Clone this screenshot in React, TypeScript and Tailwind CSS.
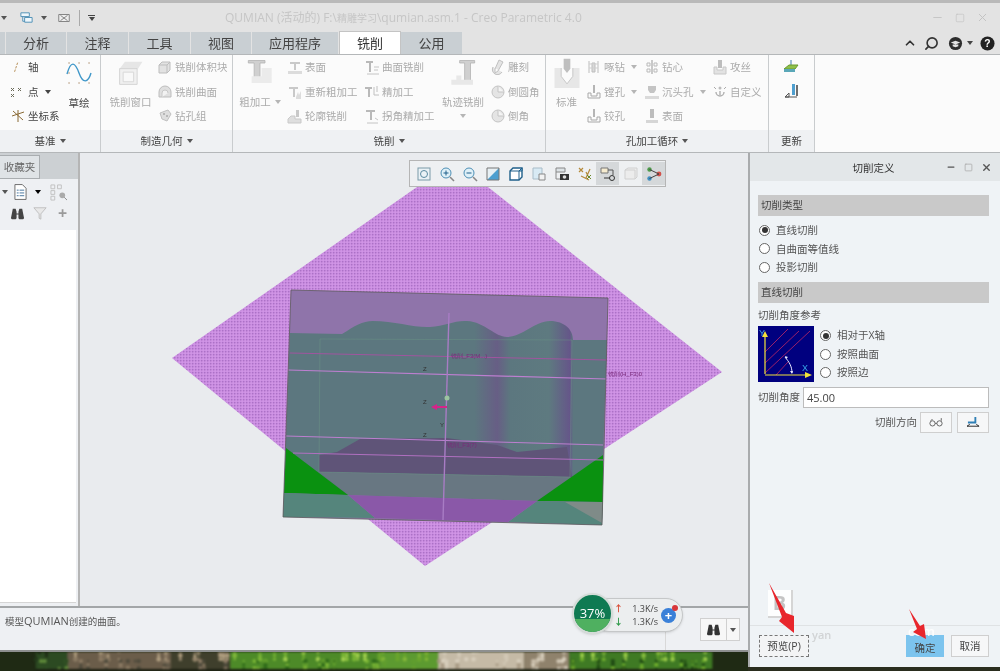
import React from 'react';
import { ChevronUp, Search, Minus, Square, X } from 'lucide-react';

const Caret = ({ className = 'border-t-[#555]' }: { className?: string }) => (
  <span className={`inline-block w-0 h-0 border-x-[3px] border-x-transparent border-t-[4px] ${className}`} />
);

// small greyed ribbon glyphs, all on a 16x16 grid
const glyphs: Record<string, React.ReactNode> = {
  block: <><path d="M2 6l3-3h8v8l-3 3H2z" fill="#e2e2e2" stroke="#bdbdbd" /><path d="M2 6h8v8M10 6l3-3" fill="none" stroke="#bdbdbd" /></>,
  dome: <><path d="M2 13V8a6 6 0 0 1 12 0v5z" fill="#dfdfdf" stroke="#bdbdbd" /><path d="M5 13V9a3 3 0 0 1 6 0" fill="#f2f2f2" stroke="#c8c8c8" /></>,
  drill: <><path d="M3 5l8-3 3 4-4 7-5-2z" fill="#dedede" stroke="#c0c0c0" /><circle cx="7" cy="6" r="1" fill="#aaa" /><circle cx="10" cy="8" r="1" fill="#aaa" /></>,
  face: <><path d="M3 3h10v2H9v6H7V5H3z" fill="#c9c9c9" /><path d="M1 12h14v3H1z" fill="#dcdcdc" /></>,
  rough: <><path d="M2 3h9v2H8v8H6V5H2z" fill="#c9c9c9" /><path d="M9 13l2-5 1 3 2-4v8H9z" fill="#dcdcdc" /></>,
  contour: <><path d="M9 2h3v7H9z" fill="#c9c9c9" /><path d="M1 15v-4l3-3h4v3h6v4z" fill="#dedede" stroke="#c9c9c9" /></>,
  surf: <><path d="M2 2h7v2H7v9H5V4H2z" fill="#b9b9b9" /><path d="M10 8h5M10 11h4M3 15h12" stroke="#c4c4c4" /></>,
  finish: <><path d="M1 3h7v2H6v8H4V5H1z" fill="#b9b9b9" /><path d="M10 3v8h5M13 2v6" stroke="#c0c0c0" fill="none" /></>,
  corner: <><path d="M2 2h9v2H8v8H6V4H2z" fill="#b9b9b9" /><path d="M3 15h11M11 10l3 2" stroke="#c4c4c4" /></>,
  carve: <path d="M9 1l4 2-5 9-3 2 0-4zM3 8a5 5 0 0 0 9 5" fill="#e4e4e4" stroke="#c0c0c0" />,
  round: <><circle cx="8" cy="8" r="6" fill="#e4e4e4" stroke="#c4c4c4" /><path d="M8 2v6h6" fill="#f4f4f4" stroke="#c4c4c4" /></>,
  peck: <><path d="M3 2v12M12 2v12M6 4h3v9H6z" fill="#dadada" stroke="#bdbdbd" /><path d="M3 5h9M3 9h9" stroke="#cfcfcf" /></>,
  core: <><path d="M3 4h3v3H3zM10 4h3v3h-3zM3 10h3v3H3zM10 10h3v3h-3z" fill="none" stroke="#b9b9b9" /><path d="M7 1h2v14H7z" fill="#c9c9c9" /></>,
  tap: <><path d="M6 1h4v8H6z" fill="#bdbdbd" /><path d="M2 8h3v3h6V8h3v7H2z" fill="#e2e2e2" stroke="#c8c8c8" /></>,
  bore: <><path d="M7 1h2v8H7z" fill="#b5b5b5" /><path d="M2 9h3v3h6V9h3v5H2z" fill="#fafafa" stroke="#a8a8a8" /></>,
  sink: <><path d="M4 2h8v4l-2 3H6L4 6z" fill="#c4c4c4" /><path d="M1 12h14v3H1z" fill="#dadada" /></>,
  custom: <><path d="M2 3l2 2M14 3l-2 2" stroke="#aaa" /><circle cx="8" cy="4" r="1.5" fill="#bbb" /><path d="M4 8a4 4 0 1 0 8 0M8 7v4" fill="none" stroke="#b0b0b0" strokeWidth="1.4" /></>,
  base: <><path d="M6 1h4v9H6z" fill="#bdbdbd" /><path d="M2 12h12v3H2z" fill="#d6d6d6" /></>,
};

const Tool = ({ glyph, label, caret }: { glyph: string; label: string; caret?: boolean }) => (
  <div className="h-[24.5px] flex items-center gap-[2px] text-[#ababab] whitespace-nowrap">
    <svg viewBox="0 0 16 16" className="w-4 h-4 shrink-0">{glyphs[glyph]}</svg>
    <span>{label}</span>
    {caret && <Caret className="ml-1 border-t-[#b5b5b5]" />}
  </div>
);

const BigLabel = ({ children, caret }: { children: React.ReactNode; caret?: boolean }) => (
  <div className="text-[#ababab] mt-[9px] flex items-center gap-1 whitespace-nowrap">{children}{caret && <Caret className="border-t-[#b5b5b5]" />}</div>
);

const Group = ({ width, title, caret = true, children }: { width: string; title: string; caret?: boolean; children: React.ReactNode }) => (
  <div className={`${width} shrink-0 flex flex-col border-r border-[#c9ccce]`}>
    <div className="h-[75px] flex overflow-hidden">{children}</div>
    <div className="flex-1 bg-[#eff1f3] flex items-center justify-center gap-1 text-[#444]">
      {title}{caret && <Caret />}
    </div>
  </div>
);

const tabs = [
  { name: '分析', w: 'w-[60px]' },
  { name: '注释', w: 'w-[61px]' },
  { name: '工具', w: 'w-[61px]' },
  { name: '视图', w: 'w-[60px]' },
  { name: '应用程序', w: 'w-[86px]' },
];

const Radio = ({ on, label }: { on?: boolean; label: string }) => (
  <div className="h-[18.5px] flex items-center gap-[6px] text-[#555]">
    <span className="w-[11px] h-[11px] rounded-full border border-[#666] bg-white flex items-center justify-center">
      {on && <span className="w-[6px] h-[6px] rounded-full bg-[#333]" />}
    </span>
    <span>{label}</span>
  </div>
);

const SectionHead = ({ children }: { children: React.ReactNode }) => (
  <div className="h-[21px] bg-[#c9c9c9] flex items-center pl-[3px] text-[#444]">{children}</div>
);

const Binoculars = ({ className = 'w-4 h-4', fill = '#333' }: { className?: string; fill?: string }) => (
  <svg viewBox="0 0 16 16" className={className}>
    <path d="M3 3h3l1 3v2h2V6l1-3h3l2 10-1 1H10l-1-1V9H7v4l-1 1H2l-1-1z" fill={fill} />
  </svg>
);

const ToolbarButton = ({ active, children }: { active?: boolean; children: React.ReactNode }) => (
  <div className={`w-[23px] h-[23px] flex items-center justify-center ${active ? 'bg-[#d5d8da]' : ''}`}>
    <svg viewBox="0 0 16 16" className="w-4 h-4">{children}</svg>
  </div>
);

// desktop wallpaper along the bottom of the window: colour zones, then speckle
const zones = [
  { x: 0, w: 35, fill: '#2c4a22' },
  { x: 35, w: 115, fill: '#6b5d4a' },
  { x: 150, w: 65, fill: '#3f3f2c' },
  { x: 215, w: 165, fill: '#4d8a28' },
  { x: 380, w: 65, fill: '#5c9a30' },
  { x: 445, w: 95, fill: '#c5baa6' },
  { x: 540, w: 50, fill: '#8f826c' },
  { x: 590, w: 158, fill: '#3f7a24' },
];

const speckleFill = (x: number, tone: number) => {
  if (x < 35) return ['#2c4a22', '#5f8a3a', '#1d2a16'][tone];
  if (x < 215) return ['#8b7a63', '#4e4a3c', '#b3a182'][tone];
  if (x < 380) return ['#7ab535', '#2f6a1a', '#a4d050'][tone];
  if (x < 445) return ['#6aa52c', '#5c9a30', '#86b83a'][tone];
  if (x < 590) return ['#d8cfbd', '#a89a84', '#c5baa6'][tone];
  return ['#6fae2c', '#1f4a14', '#9ccc4a'][tone];
};

const wallpaper = Array.from({ length: 700 }, (_, i) => {
  const x = (i * 7919 + i * i * 13) % 748;
  const y = (i * i * 31 + i * 17) % 20;
  return { x, y, r: 1 + (i % 3) * 0.7, fill: speckleFill(x, (i * 5 + (i >> 2)) % 3) };
});

export default function App() {
  return (
    <div className="relative w-[1000px] h-[671px] overflow-hidden bg-[#1f2a14] text-[10.5px] leading-none blur-[0.35px] [font-family:'Open_Sans','Noto_Sans_CJK_SC',sans-serif]">
      <div className="h-[3px] bg-[#b9b9b9]" />

      {/* Title bar */}
      <div className="h-[29px] bg-[#e3e3e3] flex items-center relative">
        <div className="flex items-center w-[225px] pl-[1px] gap-[7px]">
          <Caret />
          <svg viewBox="0 0 16 16" className="w-[15px] h-[15px] ml-[5px]"><path d="M2 3h9v4H2zM6 8h8v5H6zM4 7v5h2" fill="#eef6fb" stroke="#4d8fb5" /></svg>
          <Caret />
          <svg viewBox="0 0 16 16" className="w-[14px] h-[14px] ml-[3px]"><path d="M2 4h12v8H2zM4 5l8 6M12 5l-8 6" fill="#eee" stroke="#777" /></svg>
          <span className="w-px h-[16px] bg-[#aaa] ml-[1px]" />
          <span className="flex flex-col items-center gap-[1px] ml-[1px]"><span className="w-[7px] h-px bg-[#444]" /><Caret className="border-t-[#444]" /></span>
        </div>
        <span className="text-[12px] text-[#c6c6c6] whitespace-nowrap">QUMIAN (活动的) F:\<span className="text-[10px]">精雕学习</span>\qumian.asm.1 - Creo Parametric 4.0</span>
        <div className="ml-auto flex items-center gap-[11px] pr-[11px] text-[#c2c2c2]">
          <Minus size={13} strokeWidth={1.6} />
          <Square size={10} strokeWidth={1.6} />
          <X size={13} strokeWidth={1.8} />
        </div>
      </div>

      {/* Tabs */}
      <div className="h-[22px] bg-[#e3e3e3] flex items-stretch text-[13px] text-[#444] relative">
        <div className="w-[5px] bg-[#c9cfd3] mr-px" />
        {tabs.map((t) => (
          <div key={t.name} className={`${t.w} bg-[#c9cfd3] mr-px flex items-center justify-center`}>{t.name}</div>
        ))}
        <div className="w-[62px] bg-white border-x border-t border-[#c4c4c4] flex items-center justify-center -mt-px text-[#333]">铣削</div>
        <div className="w-[61px] bg-[#c9cfd3] flex items-center justify-center">公用</div>
        <div className="ml-auto flex items-center gap-[7px] pr-[5px] text-[#333]">
          <ChevronUp size={14} strokeWidth={3} />
          <Search size={15} strokeWidth={2.6} className="-scale-x-100" />
          <svg viewBox="0 0 16 16" className="w-[15px] h-[15px] ml-[2px]"><circle cx="8" cy="8" r="7" fill="#2d2d2d" /><path d="M3 7l5-2 5 2-5 2zM5 9v2l3 1 3-1V9" fill="#e3e3e3" /></svg>
          <Caret className="border-t-[#444] -ml-[3px]" />
          <svg viewBox="0 0 16 16" className="w-[15px] h-[15px]"><circle cx="8" cy="8" r="7.5" fill="#222" /><text x="8" y="12" textAnchor="middle" fontSize="11" fontWeight="700" fill="#fff" fontFamily="Liberation Sans, sans-serif">?</text></svg>
        </div>
      </div>

      {/* Ribbon */}
      <div className="h-[99px] bg-[#fbfbfb] flex items-stretch border-y border-[#b4b7b9]">
        <Group width="w-[101px]" title="基准">
          <div className="w-[65px] pl-[12px] text-[#444] shrink-0">
            <div className="h-[24.5px] flex items-center gap-[8px]"><svg viewBox="0 0 10 14" className="w-[8px] h-[13px]"><path d="M7 1L3 13" stroke="#a5742e" strokeDasharray="3 1.5" /></svg><span>轴</span></div>
            <div className="h-[24.5px] flex items-center gap-[4px] -ml-[2px]"><svg viewBox="0 0 14 14" className="w-[14px] h-[14px]"><path d="M1 3l3 3M4 3L1 6M8 3l3 3M11 3L8 6M1 9l3 3M4 9l-3 3" stroke="#6b6b5a" /></svg><span>点</span><Caret className="ml-[2px]" /></div>
            <div className="h-[24.5px] flex items-center gap-[2px] -ml-[2px]"><svg viewBox="0 0 16 16" className="w-[16px] h-[16px]"><path d="M8 2v12M2 8l12-4M3 3l10 9" stroke="#8a6a35" fill="none" /></svg><span className="whitespace-nowrap">坐标系</span></div>
          </div>
          <div className="flex flex-col items-center text-[#444] ml-[1px]">
            <svg viewBox="0 0 26 26" className="w-[26px] h-[26px] mt-[5px]"><path d="M1 14C5 0 9 2 13 13s9 10 12 0" fill="none" stroke="#3f97c9" strokeWidth="1.4" /><path d="M3 3h.1M13 3h.1M23 3h.1M3 13h.1M23 23h.1M3 23h.1M13 23h.1" stroke="#b49a7c" strokeWidth="1.5" strokeLinecap="round" /></svg>
            <span className="mt-[12px]">草绘</span>
          </div>
        </Group>

        <Group width="w-[132px]" title="制造几何">
          <div className="w-[49px] shrink-0 flex flex-col items-center ml-[5px]">
            <svg viewBox="0 0 32 32" className="w-[28px] h-[30px] mt-[3px]"><path d="M3 11l6-8h20l-5 8z" fill="#e6e6e6" /><path d="M3 11h20v18H3z" fill="#f0f0f0" stroke="#d0d0d0" /><path d="M7 15h12v11H7z" fill="#f8f8f8" stroke="#d5d5d5" /></svg>
            <BigLabel>铣削窗口</BigLabel>
          </div>
          <div className="ml-[2px]">
            <Tool glyph="block" label="铣削体积块" />
            <Tool glyph="dome" label="铣削曲面" />
            <Tool glyph="drill" label="钻孔组" />
          </div>
        </Group>

        <Group width="w-[313px]" title="铣削">
          <div className="w-[48px] shrink-0 flex flex-col items-center ml-[3px]">
            <svg viewBox="0 0 32 36" className="w-[28px] h-[30px] mt-[3px]"><path d="M2 3h20v3h-6v23h-7V6H2z" fill="#d0d0d0" stroke="#b5b5b5" /><path d="M6 30h24V12H18v10H6z" fill="#ebebeb" /></svg>
            <BigLabel caret>粗加工</BigLabel>
          </div>
          <div className="w-[77px] shrink-0 ml-[3px]">
            <Tool glyph="face" label="表面" />
            <Tool glyph="rough" label="重新粗加工" />
            <Tool glyph="contour" label="轮廓铣削" />
          </div>
          <div className="w-[76px] shrink-0">
            <Tool glyph="surf" label="曲面铣削" />
            <Tool glyph="finish" label="精加工" />
            <Tool glyph="corner" label="拐角精加工" />
          </div>
          <div className="w-[46px] shrink-0 flex flex-col items-center">
            <svg viewBox="0 0 32 36" className="w-[28px] h-[30px] mt-[3px]"><path d="M12 3h18v3h-5v22h-7V6h-6z" fill="#d0d0d0" stroke="#b5b5b5" /><path d="M2 32v-6h6v-5h6v5h14v6z" fill="#e8e8e8" /></svg>
            <BigLabel>轨迹铣削</BigLabel>
            <Caret className="mt-[6px] border-t-[#b5b5b5]" />
          </div>
          <div className="ml-[4px]">
            <Tool glyph="carve" label="雕刻" />
            <Tool glyph="round" label="倒圆角" />
            <Tool glyph="round" label="倒角" />
          </div>
        </Group>

        <Group width="w-[223px]" title="孔加工循环">
          <div className="w-[31px] shrink-0 flex flex-col items-center ml-[5px]">
            <svg viewBox="0 0 30 36" className="w-[28px] h-[30px] mt-[3px]"><path d="M0 12h30v24H0z" fill="#e7e7e7" /><path d="M8 12v10l7 9 7-9V12" fill="#fbfbfb" stroke="#c0c0c0" /><path d="M11 1h8v12l-4 5-4-5z" fill="#bfbfbf" /></svg>
            <BigLabel>标准</BigLabel>
          </div>
          <div className="w-[58px] shrink-0 ml-[4px]">
            <Tool glyph="peck" label="啄钻" caret />
            <Tool glyph="bore" label="镗孔" caret />
            <Tool glyph="bore" label="铰孔" />
          </div>
          <div className="w-[68px] shrink-0">
            <Tool glyph="core" label="钻心" />
            <Tool glyph="sink" label="沉头孔" caret />
            <Tool glyph="base" label="表面" />
          </div>
          <div>
            <Tool glyph="tap" label="攻丝" />
            <Tool glyph="custom" label="自定义" />
          </div>
        </Group>

        <Group width="w-[46px]" title="更新" caret={false}>
          <div className="w-full flex flex-col items-center gap-[8px] pt-[4px] -ml-[1px]">
            <svg viewBox="0 0 16 16" className="w-[16px] h-[16px]"><path d="M8 1v7" stroke="#3d7db0" /><path d="M1 10l5-4h9l-3 4z" fill="#8fc04a" stroke="#6a9a30" /><path d="M1 10h11v3H1z" fill="#5aa7b8" /></svg>
            <svg viewBox="0 0 16 16" className="w-[16px] h-[16px]"><path d="M9 1h3v11H9z" fill="#4f9fcf" /><path d="M14 2v11" stroke="#333" strokeWidth="1.4" /><path d="M2 14l4-4v4z" fill="none" stroke="#555" /><path d="M2 14h12" stroke="#555" /></svg>
          </div>
        </Group>
        <div className="flex-1" />
      </div>

      {/* Work area */}
      <div className="flex h-[518px]">
        <div className="w-[748px] flex flex-col">
          <div className="h-[453px] flex">
            {/* Model tree panel */}
            <div className="w-[80px] flex flex-col bg-[#eef0f3] border-r-2 border-[#b5b5b5] shrink-0">
              <div className="h-[26px] bg-[#ccd0d3] flex items-end">
                <div className="w-[41px] h-[24px] bg-[#dfe3e6] border border-[#a9adb0] flex items-center justify-center text-[#666] -ml-px">收藏夹</div>
              </div>
              <div className="h-[51px] flex flex-col gap-[2px] pt-[3px] pl-[2px]">
                <div className="flex items-center h-[20px]">
                  <Caret />
                  <svg viewBox="0 0 14 18" className="w-[13px] h-[18px] ml-[6px]"><path d="M1 1h8l4 4v12H1z" fill="#fff" stroke="#666" /><path d="M3 7h2M6 7h5M3 10h2M6 10h5M3 13h2M6 13h5" stroke="#3f6f9a" /></svg>
                  <Caret className="ml-[8px]" />
                  <svg viewBox="0 0 18 18" className="w-[17px] h-[17px] ml-[9px]"><path d="M1 1h4v4H1zM1 7h4v4H1zM1 13h4v4H1zM8 1h4v4H8z" fill="none" stroke="#c0c0c0" /><circle cx="13" cy="12" r="3" fill="#aaa" /><path d="M15 14l3 3" stroke="#888" /></svg>
                </div>
                <div className="flex items-center h-[18px] gap-[8px] pl-[8px]">
                  <Binoculars className="w-[15px] h-[15px]" fill="#444" />
                  <svg viewBox="0 0 16 16" className="w-[14px] h-[14px]"><path d="M1 2h14L9 9v6l-2-1V9z" fill="#e8e8e8" stroke="#bbb" /></svg>
                  <span className="text-[16px] font-bold text-[#9a9a9a] leading-none ml-[3px]">+</span>
                </div>
              </div>
              <div className="flex-1 bg-white mr-[2px] mb-[3px] border-b border-[#d5d5d5]" />
            </div>

            {/* Graphics window */}
            <div className="relative flex-1 bg-[#e9ebee]">
              <svg viewBox="80 153 668 453" className="w-full h-full block">
                <defs>
                  <pattern id="dither" width="3" height="3" patternUnits="userSpaceOnUse">
                    <rect width="3" height="3" fill="#cb8de2" />
                    <rect width="1.4" height="1.4" fill="#ab72c6" />
                    <rect x="1.6" y="1.6" width="1" height="1" fill="#dba6ee" />
                  </pattern>
                  <linearGradient id="shade" x1="0" x2="1" y1="0" y2="0">
                    <stop offset="0" stopColor="#5c777f" />
                    <stop offset="0.59" stopColor="#5c777f" />
                    <stop offset="0.66" stopColor="#675e85" />
                    <stop offset="0.7" stopColor="#5c777f" />
                    <stop offset="0.82" stopColor="#5e7a80" />
                    <stop offset="0.885" stopColor="#655689" />
                    <stop offset="0.895" stopColor="#5c777f" />
                    <stop offset="1" stopColor="#5c777f" />
                  </linearGradient>
                </defs>
                <path d="M172 358L417 187H488L722 372L425 566Z" fill="url(#dither)" />
                <path d="M291 290L608 298L602 525L283 517Z" fill="#8f74aa" />
                <path d="M290 333L342 334C355 326 362 321 373 321C395 321 415 328 430 327C445 326 455 320 467 321C485 322 495 337 507 337C522 337 535 321 550 321C565 321 573 330 573 340L607 340L603 456L602 502L284 493Z" fill="url(#shade)" />
                <path d="M319 455L337 452L360 439L447 438L497 445L517 452L567 447L572 477L319 472Z" fill="#5f5478" />
                <path d="M319 472L572 477L537 501L348 495Z" fill="#687782" />
                <path d="M286 448L348 495L284 493Z" fill="#0a9110" />
                <path d="M603 455L537 501L603 502Z" fill="#0a9110" />
                <path d="M284 493L348 495L375 518L283 517Z" fill="#55857c" />
                <path d="M537 501L603 502L602 525L508 522Z" fill="#55857c" />
                <path d="M565 502L603 502L602 523Z" fill="#7f8b88" />
                <path d="M348 495L537 501L508 522L375 518Z" fill="#8a58a8" />
                <path d="M320 339L572 340L570 477L319 472Z" fill="none" stroke="#6f9a88" strokeOpacity="0.5" strokeWidth="0.8" />
                <path d="M290 353L607 360" stroke="#a0559f" strokeWidth="1" />
                <path d="M288 370L607 379" stroke="#bd7fd0" strokeWidth="1.2" />
                <path d="M286 436L603 445" stroke="#bd7fd0" strokeWidth="1" />
                <path d="M293 453L603 460" stroke="#b070c0" strokeWidth="1" />
                <path d="M449 313L443 520" stroke="#a87cc4" strokeWidth="1.4" />
                <path d="M291 290L608 298L602 525L283 517Z" fill="none" stroke="#5c5c5c" strokeWidth="0.8" />
                <circle cx="447" cy="398" r="2.5" fill="#9cc4a0" />
                <path d="M431 407l6-3v2h10v2h-10v2z" fill="#d6248a" />
                <g fontSize="6" fill="#7a2a7a" fontFamily="Liberation Sans, sans-serif">
                  <text x="451" y="358">铣削_F3(M...)</text>
                  <text x="447" y="447">铣削_F3(7)</text>
                  <text x="608" y="376">铣削(H_F3)0</text>
                  <text x="423" y="371" fill="#333">Z</text>
                  <text x="423" y="437" fill="#333">Z</text>
                  <text x="423" y="404" fill="#333">Z</text>
                  <text x="440" y="427" fill="#333">Y</text>
                </g>
              </svg>

              {/* Graphics toolbar */}
              <div className="absolute left-[329px] top-[7px] w-[257px] h-[27px] bg-[#eef0f2] border border-[#b5b5b5] flex items-center pl-[2px]">
                <ToolbarButton><rect x="2" y="2" width="12" height="12" fill="#eaf2f6" stroke="#7a9aa8" /><circle cx="8" cy="8" r="3.5" fill="none" stroke="#5a8aa0" /></ToolbarButton>
                <ToolbarButton><circle cx="7" cy="7" r="5" fill="#dff0f8" stroke="#4d8fb5" /><path d="M4.5 7h5M7 4.5v5" stroke="#1f5f8a" /><path d="M11 11l4 4" stroke="#888" strokeWidth="1.6" /></ToolbarButton>
                <ToolbarButton><circle cx="7" cy="7" r="5" fill="#dff0f8" stroke="#4d8fb5" /><path d="M4.5 7h5" stroke="#1f5f8a" /><path d="M11 11l4 4" stroke="#888" strokeWidth="1.6" /></ToolbarButton>
                <ToolbarButton><path d="M2 2h12L2 14z" fill="#e8f0f4" /><path d="M14 2v12H2z" fill="#4d9fd0" /><path d="M2 2h12v12H2z" fill="none" stroke="#777" /></ToolbarButton>
                <ToolbarButton><path d="M2 5l3-3h9v9l-3 3H2z" fill="#fff" stroke="#1f5f8a" strokeWidth="1.4" /><path d="M11 5h3V2L11 5v9" fill="#8fc8e8" stroke="#1f5f8a" /><path d="M2 5h9" stroke="#1f5f8a" /></ToolbarButton>
                <ToolbarButton><path d="M2 2h9v11H2z" fill="#d8eaf4" stroke="#a8bcc8" /><path d="M8 8h6v6H8z" fill="#f2f2f2" stroke="#888" /></ToolbarButton>
                <ToolbarButton><path d="M2 2h9v4H2z" fill="#dde3e6" stroke="#888" /><path d="M2 6v7h4" fill="none" stroke="#888" /><path d="M6 8h9v6H6z" fill="#333" /><circle cx="10.5" cy="11" r="1.8" fill="#ddd" /></ToolbarButton>
                <ToolbarButton><path d="M2 2l4 4M6 2L2 6M9 6l2 4M13 3l-4 9M4 10l8 4" stroke="#b58a3a" strokeWidth="1.2" /><path d="M10 9l4 4M14 9l-4 4" stroke="#6a8a2a" /></ToolbarButton>
                <ToolbarButton active><path d="M1 2h7v5H1z" fill="#f6ecd0" stroke="#777" /><path d="M8 4h5v5" fill="none" stroke="#555" /><circle cx="12" cy="12" r="2.5" fill="none" stroke="#333" /><path d="M4 12h6" stroke="#333" /></ToolbarButton>
                <ToolbarButton><path d="M2 4l3-2h9v9l-2 2H2z" fill="#ececec" stroke="#d0d0d0" /><path d="M12 4v9M2 4h10" stroke="#d0d0d0" /></ToolbarButton>
                <ToolbarButton active><circle cx="3.5" cy="3.5" r="2.2" fill="#4d9a4a" /><circle cx="3.5" cy="12.5" r="2.2" fill="#3f8fc0" /><circle cx="13" cy="8" r="2.4" fill="#d2504a" /><path d="M3.5 3.5L13 8L3.5 12.5" fill="none" stroke="#444" /></ToolbarButton>
              </div>
            </div>
          </div>

          {/* Message area */}
          <div className="h-[44px] bg-[#eef0f3] border-t-2 border-[#a3a6a8] relative pl-[5px] pt-[7px] text-[#555] text-[9.5px]">
            模型<span className="text-[11px]">QUMIAN</span>创建的曲面。
            <div className="absolute left-[700px] top-[10px] w-[40px] h-[23px] bg-[#f7f7f7] border border-[#d0d0d0] flex items-center">
              <span className="w-[26px] flex justify-center border-r border-[#d0d0d0] h-full items-center"><Binoculars className="w-[15px] h-[15px]" /></span>
              <span className="flex-1 flex justify-center"><Caret /></span>
            </div>
            <div className="absolute left-[665px] top-0 bottom-0 w-px bg-[#d8d8d8]" />
          </div>

          {/* Desktop behind the window */}
          <div className="h-[21px] border-t-2 border-[#8d8f8f] overflow-hidden">
            <svg viewBox="0 0 748 21" className="w-[748px] h-[19px] block blur-[1px]">
              <rect width="748" height="21" fill="#1f2a14" />
              {zones.map((z) => (
                <rect key={z.x} x={z.x} y="0" width={z.w} height="19" fill={z.fill} />
              ))}
              {wallpaper.map((p, i) => (
                <circle key={i} cx={p.x} cy={p.y} r={p.r} fill={p.fill} />
              ))}
              <rect y="19" width="748" height="2" fill="#1a1c12" />
            </svg>
          </div>
        </div>

        {/* Cut definition dialog */}
        <div className="w-[252px] flex flex-col">
          <div className="h-[514px] flex flex-col bg-[#eff3f6] border-l-2 border-[#a9abad]">
            <div className="h-[28px] bg-[#e3e7e9] relative flex items-center justify-center pr-[3px] pt-[2px] text-[#333]">
              切削定义
              <div className="absolute right-[8px] top-0 bottom-0 flex items-center gap-[8px] text-[#555]">
                <Minus size={10} strokeWidth={3} />
                <Square size={9} className="text-[#aaa]" />
                <X size={11} strokeWidth={3} />
              </div>
            </div>
            <div className="flex-1 flex flex-col pl-[8px] pr-[11px] pt-[14px]">
              <SectionHead>切削类型</SectionHead>
              <div className="mt-[5px] mb-[5px] pl-[1px]">
                <Radio on label="直线切削" />
                <Radio label="自曲面等值线" />
                <Radio label="投影切削" />
              </div>
              <SectionHead>直线切削</SectionHead>
              <div className="mt-[7px] text-[#555]">切削角度参考</div>
              <div className="flex items-center mt-[6px] gap-[6px]">
                <svg viewBox="0 0 56 56" className="w-[56px] h-[56px] shrink-0">
                  <rect width="56" height="56" fill="#00007f" />
                  <path d="M7 26L30 3M7 37L41 5M7 47L52 5M18 49L30 36" stroke="#9a1f6a" strokeWidth="1" />
                  <path d="M7 48V7M7 49H50" stroke="#f2e23a" strokeWidth="1.2" />
                  <path d="M4 11l3-6 3 6zM47 46l7 3-7 3z" fill="#f2e23a" />
                  <path d="M27 31C31 36 34 40 34 47" fill="none" stroke="#e8e8ff" strokeWidth="1" />
                  <path d="M27 30l3 1-2 2zM34 48l-2-3h3z" fill="#e8e8ff" />
                  <text x="1" y="10" fontSize="9" fill="#38a8e8" fontFamily="Liberation Sans, sans-serif">Y</text>
                  <text x="44" y="45" fontSize="9" fill="#38a8e8" fontFamily="Liberation Sans, sans-serif">X</text>
                </svg>
                <div>
                  <Radio on label="相对于X轴" />
                  <Radio label="按照曲面" />
                  <Radio label="按照边" />
                </div>
              </div>
              <div className="flex items-center mt-[4px] h-[22px] text-[#555]">
                <span className="w-[45px] shrink-0 whitespace-nowrap">切削角度</span>
                <div className="flex-1 h-[21px] bg-white border border-[#bcbcbc] flex items-center pl-[3px] text-[#444] text-[11px]">45.00</div>
              </div>
              <div className="flex items-center justify-end gap-[5px] mt-[4px] text-[#555]">
                <span className="mr-[-2px]">切削方向</span>
                <div className="w-[32px] h-[21px] bg-[#f6f7f8] border border-[#cfcfcf] flex items-center justify-center">
                  <svg viewBox="0 0 16 10" className="w-[14px] h-[9px]"><circle cx="4" cy="6" r="3" fill="none" stroke="#555" /><circle cx="12" cy="6" r="3" fill="none" stroke="#555" /><path d="M7 6h2M2 3l2-2M14 3V0" stroke="#555" fill="none" /></svg>
                </div>
                <div className="w-[32px] h-[21px] bg-[#f6f7f8] border border-[#cfcfcf] flex items-center justify-center">
                  <svg viewBox="0 0 16 14" className="w-[15px] h-[13px]"><path d="M10 1v6H2" fill="none" stroke="#2f7fb5" strokeWidth="2" /><path d="M1 11h13M1 11l3-2M14 11l-3-2" stroke="#222" fill="none" /></svg>
                </div>
              </div>
              <div className="mt-auto border-t border-[#dfe2e4] -ml-[8px] -mr-[11px] h-[42px] pl-[9px] pr-[11px] pt-[9px] flex items-start justify-between">
                <div className="w-[50px] h-[22px] border border-dashed border-[#777] bg-[#f3f4f5] flex items-center justify-center text-[#444]">预览(P)</div>
                <div className="flex gap-[7px]">
                  <div className="w-[38px] h-[22px] bg-[#7cc4ee] flex items-end pb-[4px] justify-center text-[#444]">确定</div>
                  <div className="w-[38px] h-[22px] bg-[#f6f7f8] border border-[#cfcfcf] flex items-center justify-center text-[#444]">取消</div>
                </div>
              </div>
            </div>
          </div>
          <div className="flex-1 bg-[#2a2d1e]" />
        </div>
      </div>

      {/* Network speed widget floating over the window */}
      <div className="absolute left-[592px] top-[598px] w-[91px] h-[34px] rounded-full bg-[#eceeef] border border-[#c5c7c8] shadow flex items-center pl-[21px]">
        <div className="w-[44px] text-[9px] text-[#444] flex flex-col gap-[4px]">
          <div className="flex justify-between"><span className="text-[#d9503a] font-bold">↑</span><span>1.3K/s</span></div>
          <div className="flex justify-between"><span className="text-[#2f9a4a] font-bold">↓</span><span>1.3K/s</span></div>
        </div>
        <div className="relative ml-[3px] w-[15px] h-[15px] rounded-full bg-[#3a80d8] flex items-center justify-center text-white text-[13px] font-bold">
          +
          <span className="absolute -top-[3px] -right-[2px] w-[6px] h-[6px] rounded-full bg-[#d8363a]" />
        </div>
      </div>
      <div className="absolute left-[572px] top-[593px] w-[41px] h-[41px] rounded-full border-2 border-[#d5dcd8] shadow overflow-hidden bg-[#0f7a52] flex items-center justify-center text-white text-[13px]">
        <div className="absolute inset-x-0 bottom-0 h-[13px] bg-[#4fb060]" />
        <span className="relative">37%</span>
      </div>

      {/* Baidu experience watermark and red arrows */}
      <div className="absolute left-[768px] top-[590px] w-[25px] h-[28px] bg-white/90 border-r-2 border-b-2 border-[#d5d5d5] flex items-center justify-center text-[#c4c4c4] text-[20px] font-bold">B</div>
      <div className="absolute left-[812px] top-[629px] text-[#c4c6c8]/70 text-[11px] font-semibold">yan</div>
      <div className="absolute left-[908px] top-[625px] text-white/85 text-[13px] font-semibold">com</div>
      <svg viewBox="0 0 1000 671" className="absolute inset-0 w-[1000px] h-[671px] pointer-events-none">
        <path d="M769 583L786 613L794 616L794 633L779 621L782 617Z" fill="#e8262c" />
        <path d="M909 609L920 626L924 624L926 639L913 632L917 629Z" fill="#e8262c" />
      </svg>
    </div>
  );
}
